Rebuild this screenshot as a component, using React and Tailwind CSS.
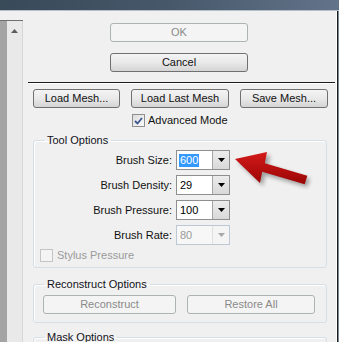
import React from 'react';

const font = { fontFamily: '"Liberation Sans", Arial, sans-serif' };

const Button = ({ children, width, disabled }) => (
  <div
    className={
      'flex shrink-0 items-center justify-center h-[19px] rounded-[3px] border text-[11px] ' +
      (disabled
        ? 'border-[#adb2b5] bg-[#f4f4f4] text-[#8a8a8a]'
        : 'border-[#707070] bg-linear-to-b from-[#f4f4f4] via-[#e9e9e9] to-[#d4d4d4] text-[#111]')
    }
    style={{ width }}
  >
    {children}
  </div>
);

const Combo = ({ value, selected, disabled }) => (
  <div
    className={
      'flex h-[20px] w-[54px] border ' +
      (disabled ? 'border-[#bcc8d4] bg-[#f7f7f7]' : 'border-[#8e8f8f] bg-white')
    }
  >
    <div className="flex flex-1 items-center pl-[2px]">
      <span
        className={
          'text-[11px] leading-[11px] px-[1px] py-[1px] ' +
          (selected ? 'bg-[#3399ff] text-white' : disabled ? 'text-[#9a9a9a]' : 'text-black')
        }
      >
        {value}
      </span>
    </div>
    <div
      className={
        'flex w-[17px] items-center justify-center border-l ' +
        (disabled ? 'border-[#e0e0e0] bg-[#f4f4f4]' : 'border-[#a5a5a5] bg-linear-to-b from-[#ececec] to-[#d9d9d9]')
      }
    >
      <svg width="7" height="4" viewBox="0 0 7 4">
        <polygon points="0,0 7,0 3.5,4" fill={disabled ? '#a8a8a8' : '#000'} />
      </svg>
    </div>
  </div>
);

const Row = ({ label, ...props }) => (
  <div className="flex items-center h-[20px]">
    <div className="w-[142px] pr-[4px] text-right text-[11px] text-[#111]">{label}</div>
    <Combo {...props} />
  </div>
);

const Group = ({ title, className, children }) => (
  <fieldset
    className={
      'mx-[10px] w-[294px] shrink-0 rounded-[3px] border border-[#d5dfe5] shadow-[inset_1px_1px_0_#ffffff] ' + (className || '')
    }
  >
    <legend className="ml-[10px] px-[3px] text-[11px] leading-[13px] text-[#101020]">{title}</legend>
    {children}
  </fieldset>
);

export default function App() {
  return (
    <div className="relative flex h-[342px] w-[339px] flex-col overflow-hidden bg-[#f0f0f0]" style={font}>
      <div className="h-[10px] shrink-0 bg-linear-to-r from-[#384958] via-[#46586a] to-[#63748a]" />
      <div className="h-[1px] shrink-0 bg-[#b4bfc9]" />
      <div className="flex min-h-0 flex-1 overflow-hidden">
        {/* left panel with scrollbar */}
        <div className="flex w-[23px] shrink-0 flex-col pt-[9px]">
          <div className="flex flex-1 border-t border-[#6f6f6f]">
            <div className="w-[7px] bg-[#a4a4a4]" />
            <div className="flex w-[15px] justify-center bg-[#e9e9e9] pt-[8px]">
              <svg width="7" height="4" viewBox="0 0 7 4">
                <polygon points="3.5,0 7,4 0,4" fill="#5e5e5e" />
              </svg>
            </div>
            <div className="w-[1px] bg-[#d6d6d6]" />
          </div>
        </div>

        {/* dialog body */}
        <div className="flex flex-1 flex-col shadow-[inset_-1px_0_0_#ffffff]">
          <div className="ml-[87px] mt-[12px] flex shrink-0 flex-col gap-[11px]">
            <Button width={138} disabled>OK</Button>
            <Button width={138}>Cancel</Button>
          </div>

          <div className="ml-[5px] mr-[2px] mt-[10px] h-[2px] shrink-0 border-t border-[#1c1c1c] bg-white" />

          <div className="ml-[10px] mt-[5px] flex shrink-0 gap-[11px]">
            <Button width={87}>Load Mesh...</Button>
            <Button width={98}>Load Last Mesh</Button>
            <Button width={88}>Save Mesh...</Button>
          </div>

          <div className="ml-[109px] mt-[6px] flex h-[13px] shrink-0 items-center gap-[3px]">
            <div className="flex h-[13px] w-[13px] items-center justify-center border border-[#8f8f8f] bg-linear-to-br from-[#dcdcdc] to-[#fbfbfb]">
              <svg width="9" height="8" viewBox="0 0 9 8">
                <path d="M1 4 L3.5 6.5 L8 1" stroke="#3b5590" strokeWidth="1.8" fill="none" />
              </svg>
            </div>
            <span className="text-[11px] text-[#111]">Advanced Mode</span>
          </div>

          <Group title="Tool Options" className="mt-[7px] pb-[5px]">
            <div className="mt-[3px] flex flex-col gap-[5px]">
              <Row label="Brush Size:" value="600" selected />
              <Row label="Brush Density:" value="29" />
              <Row label="Brush Pressure:" value="100" />
              <Row label="Brush Rate:" value="80" disabled />
            </div>
            <div className="ml-[6px] mt-[4px] flex h-[13px] items-center gap-[4px]">
              <div className="h-[13px] w-[13px] border border-[#c4c4c4] bg-[#f4f4f4]" />
              <span className="text-[11px] text-[#9a9a9a]">Stylus Pressure</span>
            </div>
          </Group>

          <Group title="Reconstruct Options" className="mt-[10px] pb-[8px]">
            <div className="ml-[9px] mt-[4px] flex gap-[11px]">
              <Button width={133} disabled>Reconstruct</Button>
              <Button width={128} disabled>Restore All</Button>
            </div>
          </Group>

          <Group title="Mask Options" className="mt-[8px] h-[40px]">
            <div />
          </Group>
        </div>

        <div className="w-[5px] shrink-0 border-l border-[#1a1a1a] bg-[#7b8b9a]" />
      </div>

      {/* red annotation arrow */}
      <svg className="pointer-events-none absolute left-0 top-0" width="339" height="342" viewBox="0 0 339 342">
        <defs>
          <filter id="blur" x="-20%" y="-20%" width="140%" height="140%">
            <feGaussianBlur stdDeviation="2" />
          </filter>
          <linearGradient id="red" x1="0" y1="0" x2="0" y2="1">
            <stop offset="0" stopColor="#d41a1a" />
            <stop offset="1" stopColor="#9a0505" />
          </linearGradient>
        </defs>
        <polygon
          points="238,162 270,155 268,166 310,179 307,187 265,175 263,186"
          fill="#000"
          opacity="0.35"
          filter="url(#blur)"
        />
        <polygon
          points="235,159 267,152 264.8,163.2 307.3,175.7 304.7,184.3 262.2,171.8 260,183"
          fill="url(#red)"
        />
      </svg>
    </div>
  );
}
